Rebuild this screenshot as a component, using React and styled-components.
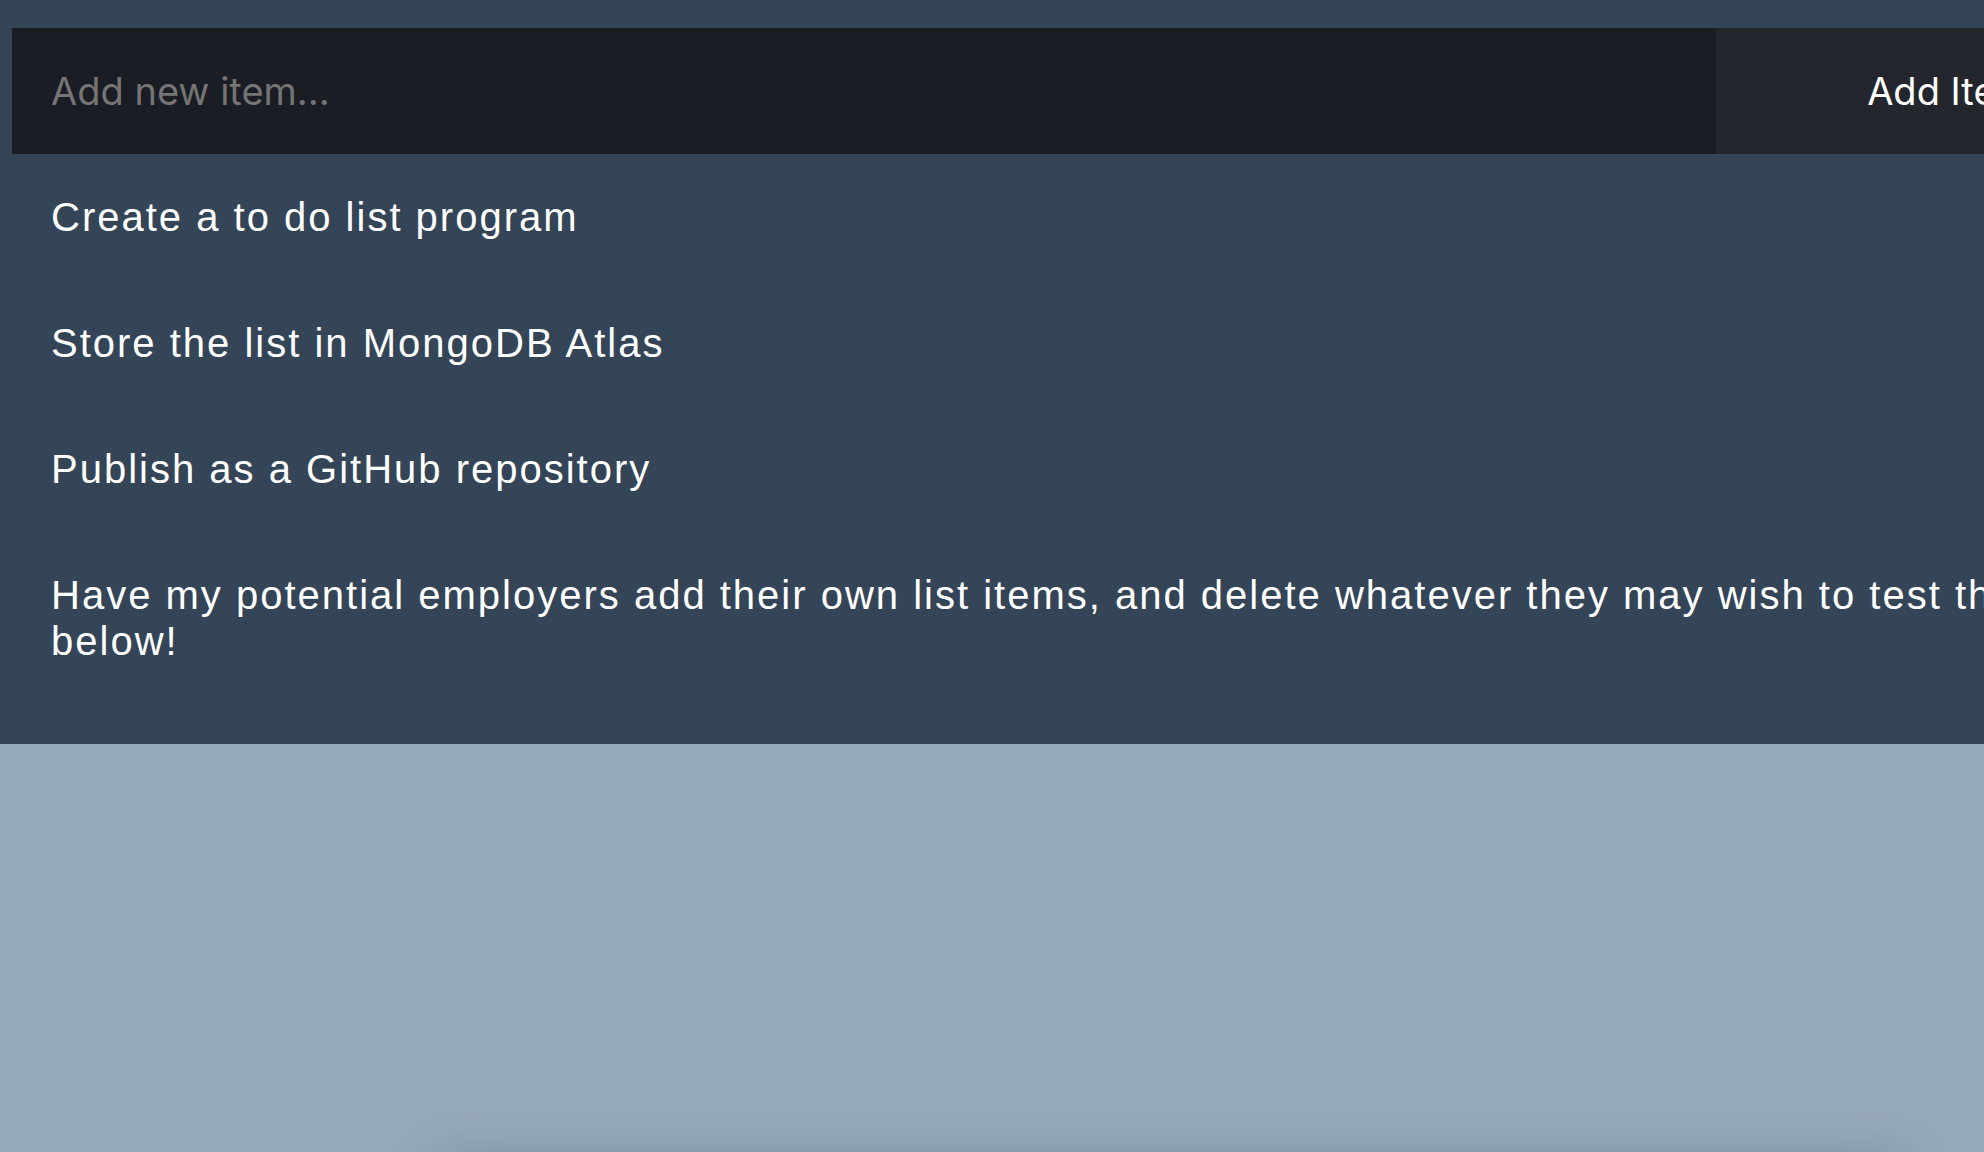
import React, { useState } from 'react'
import styled, { createGlobalStyle } from 'styled-components'

const Global = createGlobalStyle`
body{
    margin:0;
    background:#98abbc;
    overflow:hidden;
}
`

let Panel = styled.div`
background:#344557;
padding:28px 0 40px 12px;
`

let Wrap = styled.div`
width:2168px;
`

let Form = styled.form`
display:flex;
height:126px;
margin:0;
`

let Input = styled.input`
flex:1;
min-width:0;
border:none;
outline:none;
background:#1a1d23;
color:#fff;
padding:0 39px;
font-family:Inter, "Noto Sans", sans-serif;
font-size:38px;
::placeholder{
    color:#6f6f6f;
}
`

let Button = styled.button`
width:464px;
border:none;
background:#23272d;
color:#fff;
font-family:Inter, "Noto Sans", sans-serif;
font-size:38px;
cursor:pointer;
`

let List = styled.ul`
list-style:none;
margin:0;
padding:0;
`

let Item = styled.li`
padding:40px 40px 40px 39px;
color:#fff;
font-family:"Liberation Sans", Arial, sans-serif;
font-size:40px;
line-height:46px;
letter-spacing:2px;
`

let Shadow = styled.div`
width:1480px;
height:300px;
margin:416px 0 0 430px;
border-radius:12px;
background:#98abbc;
box-shadow:0 0 60px rgba(40,60,85,.28);
`

const start = [
    'Create a to do list program',
    'Store the list in MongoDB Atlas',
    'Publish as a GitHub repository',
    'Have my potential employers add their own list items, and delete whatever they may wish to test the app below!'
]

export default function App(){
    let [items, setItems] = useState(start)
    let [text, setText] = useState('')
    return <>
        <Global/>
        <Panel>
            <Wrap>
                <Form onSubmit={e=>{
                    e.preventDefault()
                    if(text.trim()) setItems([...items, text])
                    setText('')
                }}>
                    <Input placeholder="Add new item..." value={text} onChange={e=>setText(e.target.value)}/>
                    <Button type="submit">Add Item</Button>
                </Form>
                <List>
                    {items.map((i, n)=><Item key={n} onClick={()=>setItems(items.filter((_, k)=>k!==n))}>{i}</Item>)}
                </List>
            </Wrap>
        </Panel>
        <Shadow/>
    </>
}
